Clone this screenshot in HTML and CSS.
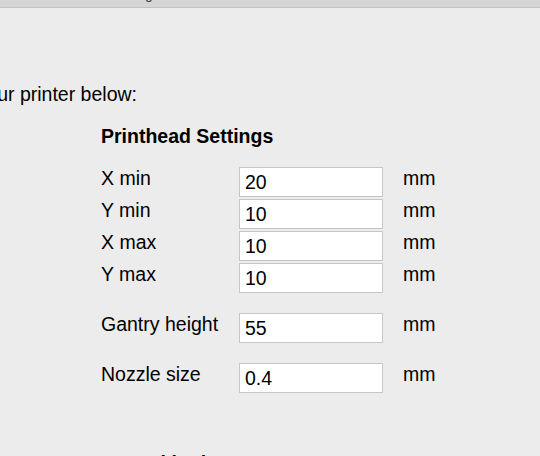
FILE: index.html
```html
<!DOCTYPE html>
<html>
<head>
    <meta charset="utf-8">
    <title>Printer Settings</title>
    <link rel="stylesheet" href="styles.css">
</head>
<body>
    <div class="title-bar">
        <span class="title-text">Printer Settings</span>
    </div>

    <div class="intro">
        <span>Please enter the details of your printer below:</span>
    </div>

    <div class="settings">
        <div class="section-title">Printhead Settings</div>

        <div class="field-group">
            <div class="field-row">
                <label class="field-label">X min</label>
                <input class="field-input" type="text" value="20">
                <span class="field-unit">mm</span>
            </div>
            <div class="field-row">
                <label class="field-label">Y min</label>
                <input class="field-input" type="text" value="10">
                <span class="field-unit">mm</span>
            </div>
            <div class="field-row">
                <label class="field-label">X max</label>
                <input class="field-input" type="text" value="10">
                <span class="field-unit">mm</span>
            </div>
            <div class="field-row">
                <label class="field-label">Y max</label>
                <input class="field-input" type="text" value="10">
                <span class="field-unit">mm</span>
            </div>
        </div>

        <div class="field-group spaced">
            <div class="field-row">
                <label class="field-label">Gantry height</label>
                <input class="field-input" type="text" value="55">
                <span class="field-unit">mm</span>
            </div>
        </div>

        <div class="field-group spaced">
            <div class="field-row">
                <label class="field-label">Nozzle size</label>
                <input class="field-input" type="text" value="0.4">
                <span class="field-unit">mm</span>
            </div>
        </div>

        <div class="section-title next">Heated bed</div>
    </div>
</body>
</html>
```

FILE: styles.css
```css
body {
    font-family: "Liberation Sans", Arial, sans-serif;
    font-size: 19.5px;
    color: #000;
    margin: 0;
    padding: 0;
    background-color: #ececec;
    overflow: hidden;
}

/* window title bar, mostly scrolled out of view */
.title-bar {
    height: 7px;
    background-color: #d5d5d5;
    border-bottom: 1px solid #c3c3c3;
    display: flex;
    align-items: flex-end;
    overflow: hidden;
    padding-left: 70px;
}
.title-text {
    font-size: 13px;
    line-height: 13px;
    margin-bottom: 6px;
    color: #222;
    white-space: nowrap;
}

/* the start of this line is cut off by the window edge */
.intro {
    width: 137px;
    margin-top: 75px;
    display: flex;
    justify-content: flex-end;
}
.intro span {
    white-space: nowrap;
    flex-shrink: 0;
}

.settings {
    margin-left: 101px;
}

.section-title {
    font-weight: bold;
    margin-top: 19px;
}
.section-title.next {
    margin-top: 59px;
}

.field-group {
    display: flex;
    flex-direction: column;
    gap: 2px;
    margin-top: 19px;
}
.field-group.spaced {
    margin-top: 20px;
}

.field-row {
    display: flex;
    align-items: flex-start;
    height: 30px;
}

.field-label {
    width: 138px;
}

.field-input {
    box-sizing: border-box;
    width: 144px;
    height: 30px;
    margin: 0;
    padding: 0 5px;
    border: 1px solid #c6c6c6;
    background-color: #fff;
    font-family: inherit;
    font-size: 19.5px;
    color: #000;
    outline: none;
}

.field-unit {
    margin-left: 20px;
}
```
